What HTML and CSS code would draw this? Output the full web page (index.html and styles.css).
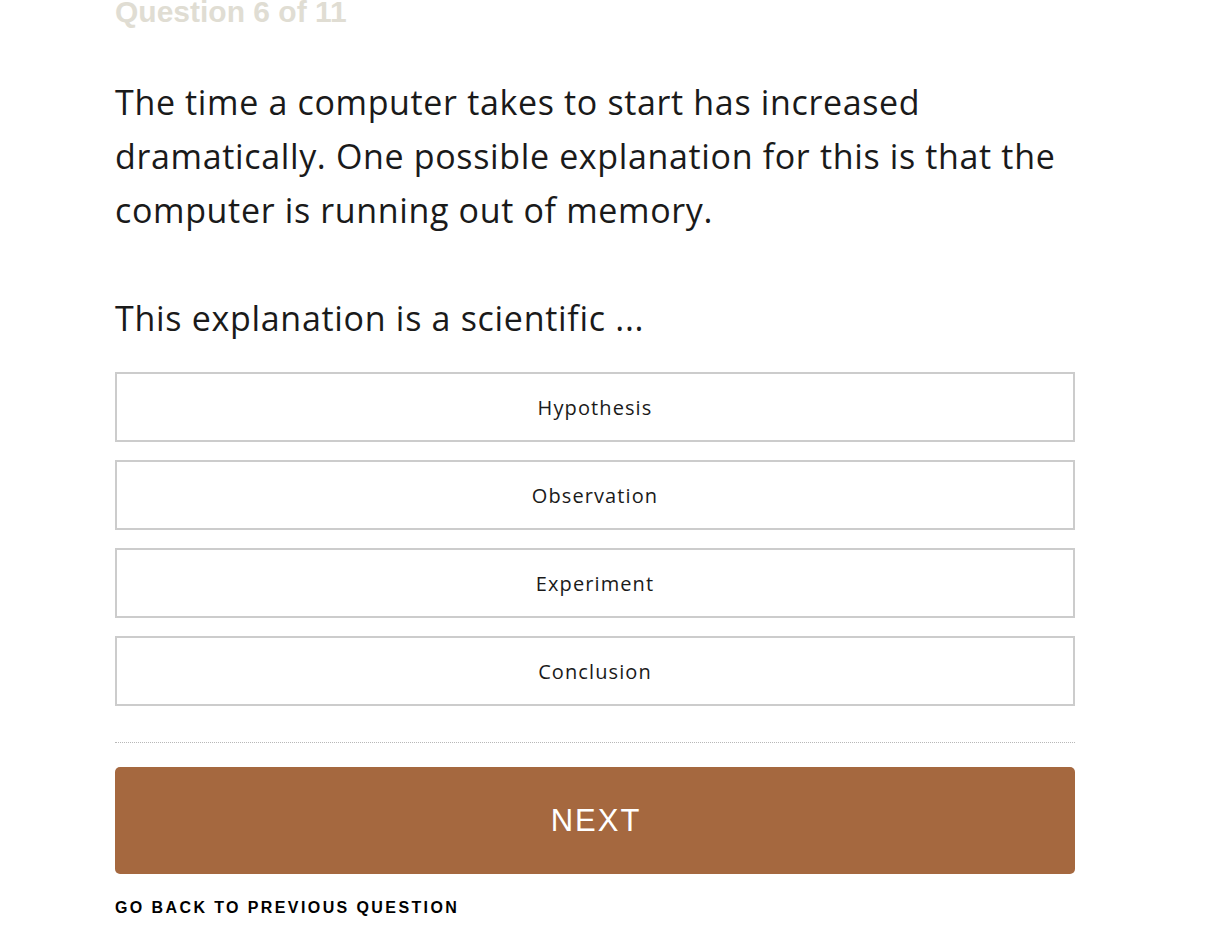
FILE: index.html
```html
<!DOCTYPE html>
<html lang="en">
<head>
<meta charset="utf-8">
<title>Quiz</title>
<link rel="stylesheet" href="styles.css">
</head>
<body>
<main class="quiz">
  <div class="counter">Question 6 of 11</div>
  <p class="prompt">The time a computer takes to start has increased dramatically. One possible explanation for this is that the computer is running out of memory.</p>
  <p class="ask">This explanation is a scientific ...</p>
  <div class="options">
    <button class="option">Hypothesis</button>
    <button class="option">Observation</button>
    <button class="option">Experiment</button>
    <button class="option">Conclusion</button>
  </div>
  <hr class="divider">
  <button class="next">NEXT</button>
  <a class="back" href="#">GO BACK TO PREVIOUS QUESTION</a>
</main>
</body>
</html>
```

FILE: styles.css
```css
html, body {
  margin: 0;
  padding: 0;
  background: #fff;
}
body {
  font-family: "Open Sans", "Liberation Sans", Arial, sans-serif;
  color: #1a1a1a;
}
.quiz {
  width: 960px;
  margin-left: 115px;
  display: flex;
  flex-direction: column;
  align-items: stretch;
}
.counter {
  font-family: "Liberation Sans", Arial, sans-serif;
  font-weight: 700;
  font-size: 30px;
  line-height: 30px;
  color: #e0ddd3;
  margin-top: -3px;
}
.prompt {
  margin: 48px 0 0;
  font-size: 34px;
  letter-spacing: 0.65px;
  line-height: 54px;
}
.ask {
  margin: 54px 0 0;
  font-size: 34px;
  letter-spacing: 0.7px;
  line-height: 54px;
}
.options {
  margin-top: 27px;
  display: flex;
  flex-direction: column;
  gap: 18px;
}
.option {
  height: 70px;
  border: 2px solid #cccccc;
  background: #fff;
  font-family: "Open Sans", "Liberation Sans", Arial, sans-serif;
  font-size: 20px;
  letter-spacing: 1.1px;
  color: #1a1a1a;
  padding: 0;
}
.divider {
  margin: 36px 0 0;
  border: 0;
  border-top: 1px dotted #b8b8b8;
  height: 0;
}
.next {
  margin-top: 24px;
  height: 107px;
  border: 0;
  border-radius: 5px;
  background: #a5683f;
  color: #fff;
  font-family: "Liberation Sans", Arial, sans-serif;
  font-size: 31px;
  letter-spacing: 2px;
  padding: 0 0 0 2px;
}
.back {
  margin-top: 25px;
  font-family: "Liberation Sans", Arial, sans-serif;
  font-size: 16px;
  font-weight: 700;
  letter-spacing: 2.4px;
  color: #000;
  text-decoration: none;
  line-height: 18px;
  align-self: flex-start;
}
```
